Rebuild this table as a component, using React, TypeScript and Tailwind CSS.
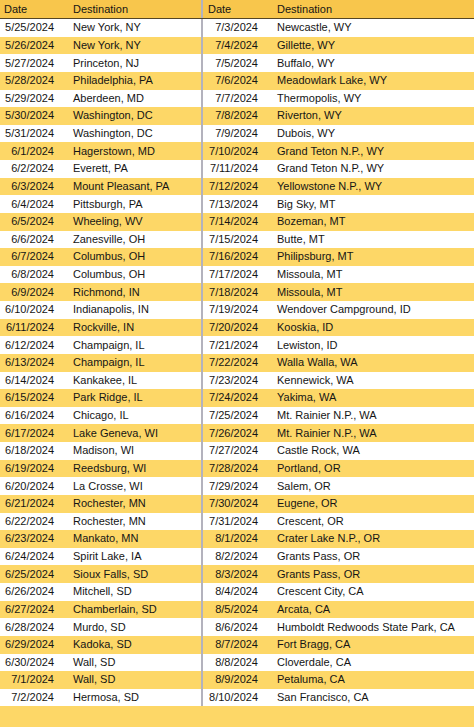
const left: [string, string][] = [
  ["5/25/2024", "New York, NY"],
  ["5/26/2024", "New York, NY"],
  ["5/27/2024", "Princeton, NJ"],
  ["5/28/2024", "Philadelphia, PA"],
  ["5/29/2024", "Aberdeen, MD"],
  ["5/30/2024", "Washington, DC"],
  ["5/31/2024", "Washington, DC"],
  ["6/1/2024", "Hagerstown, MD"],
  ["6/2/2024", "Everett, PA"],
  ["6/3/2024", "Mount Pleasant, PA"],
  ["6/4/2024", "Pittsburgh, PA"],
  ["6/5/2024", "Wheeling, WV"],
  ["6/6/2024", "Zanesville, OH"],
  ["6/7/2024", "Columbus, OH"],
  ["6/8/2024", "Columbus, OH"],
  ["6/9/2024", "Richmond, IN"],
  ["6/10/2024", "Indianapolis, IN"],
  ["6/11/2024", "Rockville, IN"],
  ["6/12/2024", "Champaign, IL"],
  ["6/13/2024", "Champaign, IL"],
  ["6/14/2024", "Kankakee, IL"],
  ["6/15/2024", "Park Ridge, IL"],
  ["6/16/2024", "Chicago, IL"],
  ["6/17/2024", "Lake Geneva, WI"],
  ["6/18/2024", "Madison, WI"],
  ["6/19/2024", "Reedsburg, WI"],
  ["6/20/2024", "La Crosse, WI"],
  ["6/21/2024", "Rochester, MN"],
  ["6/22/2024", "Rochester, MN"],
  ["6/23/2024", "Mankato, MN"],
  ["6/24/2024", "Spirit Lake, IA"],
  ["6/25/2024", "Sioux Falls, SD"],
  ["6/26/2024", "Mitchell, SD"],
  ["6/27/2024", "Chamberlain, SD"],
  ["6/28/2024", "Murdo, SD"],
  ["6/29/2024", "Kadoka, SD"],
  ["6/30/2024", "Wall, SD"],
  ["7/1/2024", "Wall, SD"],
  ["7/2/2024", "Hermosa, SD"],
];

const right: [string, string][] = [
  ["7/3/2024", "Newcastle, WY"],
  ["7/4/2024", "Gillette, WY"],
  ["7/5/2024", "Buffalo, WY"],
  ["7/6/2024", "Meadowlark Lake, WY"],
  ["7/7/2024", "Thermopolis, WY"],
  ["7/8/2024", "Riverton, WY"],
  ["7/9/2024", "Dubois, WY"],
  ["7/10/2024", "Grand Teton N.P., WY"],
  ["7/11/2024", "Grand Teton N.P., WY"],
  ["7/12/2024", "Yellowstone N.P., WY"],
  ["7/13/2024", "Big Sky, MT"],
  ["7/14/2024", "Bozeman, MT"],
  ["7/15/2024", "Butte, MT"],
  ["7/16/2024", "Philipsburg, MT"],
  ["7/17/2024", "Missoula, MT"],
  ["7/18/2024", "Missoula, MT"],
  ["7/19/2024", "Wendover Campground, ID"],
  ["7/20/2024", "Kooskia, ID"],
  ["7/21/2024", "Lewiston, ID"],
  ["7/22/2024", "Walla Walla, WA"],
  ["7/23/2024", "Kennewick, WA"],
  ["7/24/2024", "Yakima, WA"],
  ["7/25/2024", "Mt. Rainier N.P., WA"],
  ["7/26/2024", "Mt. Rainier N.P., WA"],
  ["7/27/2024", "Castle Rock, WA"],
  ["7/28/2024", "Portland, OR"],
  ["7/29/2024", "Salem, OR"],
  ["7/30/2024", "Eugene, OR"],
  ["7/31/2024", "Crescent, OR"],
  ["8/1/2024", "Crater Lake N.P., OR"],
  ["8/2/2024", "Grants Pass, OR"],
  ["8/3/2024", "Grants Pass, OR"],
  ["8/4/2024", "Crescent City, CA"],
  ["8/5/2024", "Arcata, CA"],
  ["8/6/2024", "Humboldt Redwoods State Park, CA"],
  ["8/7/2024", "Fort Bragg, CA"],
  ["8/8/2024", "Cloverdale, CA"],
  ["8/9/2024", "Petaluma, CA"],
  ["8/10/2024", "San Francisco, CA"],
];

const cols = "grid grid-cols-[60px_141px_63px_1fr]";

export default function App() {
  return (
    <div
      className="w-[474px] h-[727px] overflow-hidden bg-[#fdd767] text-[11px] leading-none text-[#151515]"
      style={{ fontFamily: '"Liberation Sans", Arial, sans-serif' }}
    >
      {/* header */}
      <div
        className={`${cols} h-[19px] bg-[#f8c64c] border-b-[1.5px] border-[#544626]`}
      >
        <div className="flex items-center pl-[4px]">Date</div>
        <div className="flex items-center pl-[13px]">Destination</div>
        <div className="flex items-center pl-[5px] border-l-2 border-[#b3b2bd]">
          Date
        </div>
        <div className="flex items-center pl-[13px]">Destination</div>
      </div>

      {left.map((row, i) => {
        const r = right[i];
        const bg = i % 2 === 0 ? "bg-white" : "bg-[#fdd767]";
        return (
          <div key={row[0]} className={`${cols} h-[17.64px] ${bg}`}>
            <div className="flex items-center justify-end pr-[6px]">{row[0]}</div>
            <div className="flex items-center pl-[13px] whitespace-nowrap">
              {row[1]}
            </div>
            <div className="flex items-center justify-end pr-[6px] border-l-2 border-[#b3b2bd]">
              {r[0]}
            </div>
            <div className="flex items-center pl-[13px] whitespace-nowrap">
              {r[1]}
            </div>
          </div>
        );
      })}
    </div>
  );
}
